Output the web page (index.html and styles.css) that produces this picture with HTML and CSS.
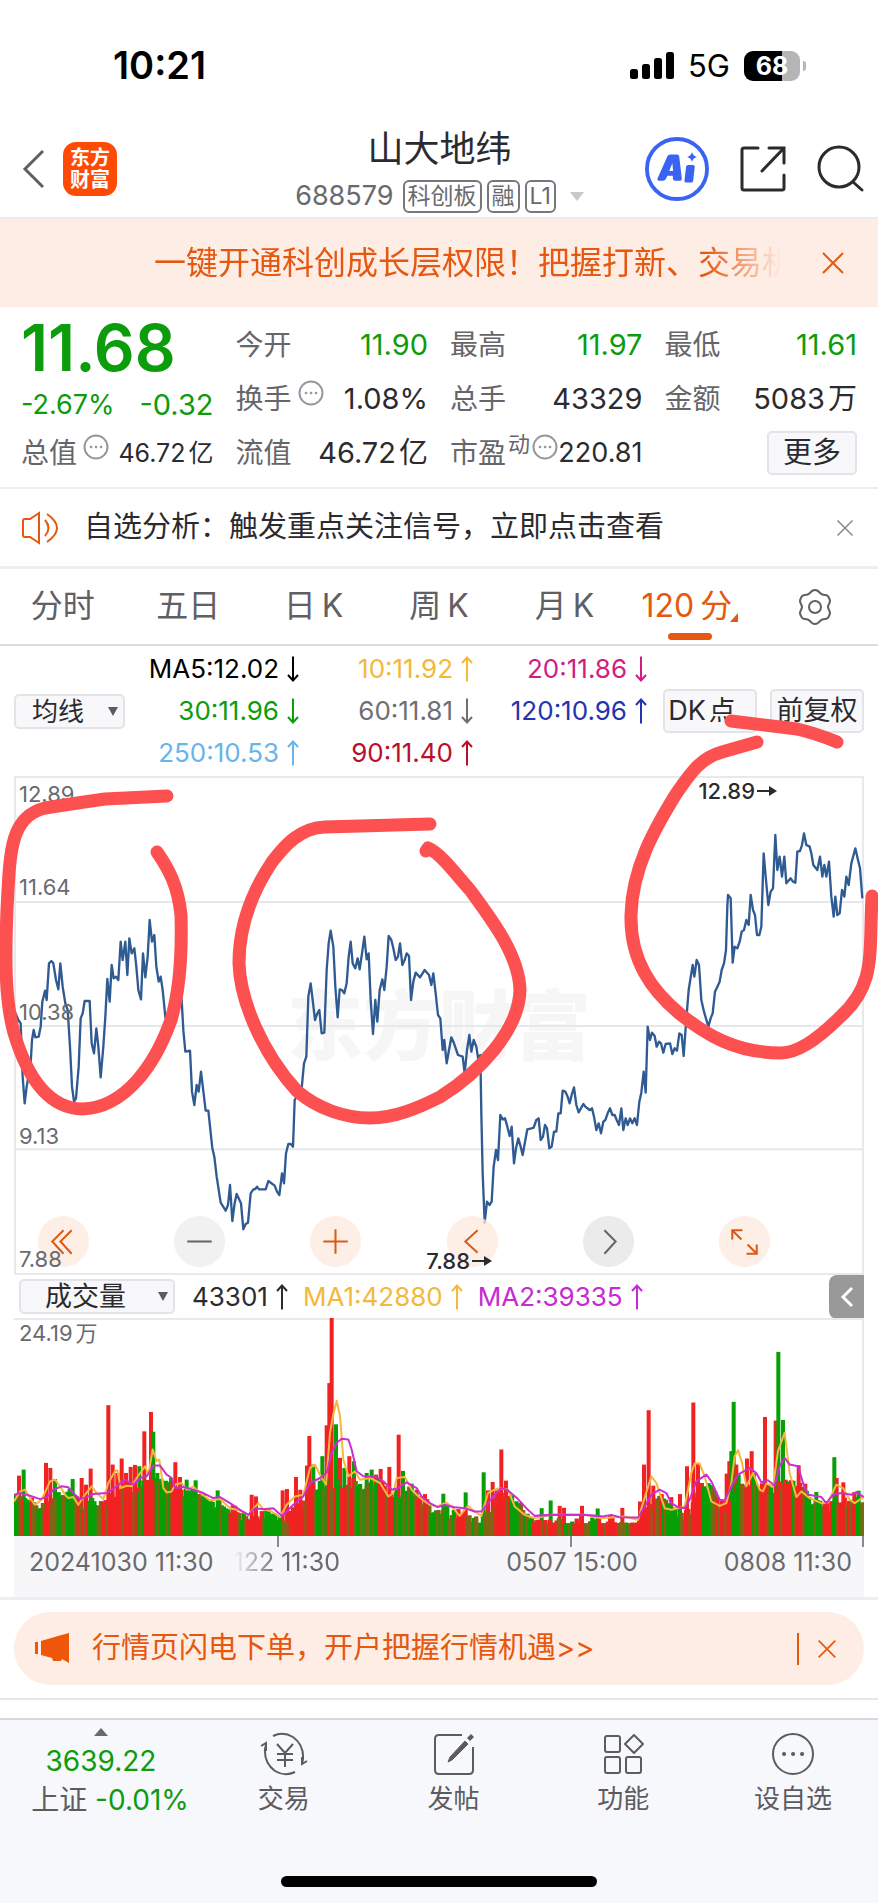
FILE: index.html
```html
<!DOCTYPE html>
<html lang="zh-CN">
<head>
<meta charset="utf-8">
<meta name="viewport" content="width=device-width, initial-scale=1">
<title>山大地纬 688579</title>
<link rel="stylesheet" href="styles.css">
</head>
<body>
<svg class="defs" aria-hidden="true">
  <symbol id="up" viewBox="0 0 12 26"><path d="M6 25.500V1.500M1 7l5-5.500L11 7"/></symbol>
  <symbol id="down" viewBox="0 0 12 26"><path d="M6 .5v24M1 19l5 5.500L11 19"/></symbol>
  <symbol id="right" viewBox="0 0 20 12"><path d="M0 6h16" stroke-width="2"/><path d="M12 1l8 5-8 5z" fill="currentColor" stroke="none"/></symbol>
  <symbol id="close" viewBox="0 0 24 24"><path d="M2 2l20 20M22 2L2 22"/></symbol>
  <symbol id="more" viewBox="0 0 26 26"><circle cx="13" cy="13" r="11.500"/><path d="M8 13h.1M13 13h.1M18 13h.1" stroke-width="2.600" stroke-linecap="round"/></symbol>
</svg>

<div class="status">
  <time class="clock">10:21</time>
  <div class="status-right">
    <svg class="signal" viewBox="0 0 44 28"><rect x="0" y="17" width="8" height="10" rx="2.500"/><rect x="12" y="12" width="8" height="15" rx="2.500"/><rect x="24" y="6" width="8" height="21" rx="2.500"/><rect x="36" y="0" width="8" height="27" rx="2.500"/></svg>
    <span class="net">5G</span>
    <span class="battery">68</span>
  </div>
</div>

<header class="top">
  <div class="top-left">
    <button class="icon-btn" aria-label="返回"><svg class="back" viewBox="0 0 24 40"><path d="M21 2L3 20l18 18"/></svg></button>
    <span class="logo"><span>东方</span><span>财富</span></span>
  </div>
  <div class="title">
    <h1>山大地纬</h1>
    <div class="code"><span class="num">688579</span><span class="tag">科创板</span><span class="tag">融</span><span class="tag">L1</span><i class="caret"></i></div>
  </div>
  <div class="top-right">
    <button class="icon-btn" aria-label="AI"><svg class="ai" viewBox="0 0 66 66"><circle cx="33" cy="33" r="31"/><path class="ai-a" fill-rule="evenodd" d="M26 18h7q2 0 2.300 2l2.700 23q.2 2-2 2h-5q-2 0-2.200-2l-.2-3h-5.500l-1.500 3q-1 2-3 2h-4q-2.600 0-1.600-2.500L23 20q1-2 3-2zM28.200 27l-3.200 8h4z"/><path class="ai-a" d="M44.500 29h5q2 0 1.800 2l-1.600 14q-.2 2-2.200 2h-5q-2 0-1.800-2l1.600-14q.2-2 2.200-2zM48.500 15.500q1 4.200 5 5.200-4 1-5 5.200-1-4.200-5-5.200 4-1 5-5.200z"/></svg></button>
    <button class="icon-btn" aria-label="分享"><svg class="share" viewBox="0 0 46 46"><path stroke-linecap="round" d="M18 2H4q-2 0-2 2v38q0 2 2 2h38q2 0 2-2V29M29 2h15v15M44 2L22 25"/></svg></button>
    <button class="icon-btn" aria-label="搜索"><svg class="search" viewBox="0 0 48 48"><circle cx="22" cy="22" r="20"/><path stroke-linecap="round" d="M36 37l9 8"/></svg></button>
  </div>
</header>

<aside class="notice">
  <a class="notice-text" href="#open">一键开通科创成长层权限！把握打新、交易机</a>
  <button class="icon-btn" aria-label="关闭"><svg class="x22"><use href="#close"/></svg></button>
</aside>

<section class="quote">
  <strong class="price">11.68</strong>
  <div class="cell"><span class="lab">今开</span><span class="green">11.90</span></div>
  <div class="cell"><span class="lab">最高</span><span class="green">11.97</span></div>
  <div class="cell"><span class="lab">最低</span><span class="green">11.61</span></div>
  <div class="cell change green"><span class="small">-2.67%</span><span>-0.32</span></div>
  <div class="cell"><span class="lab">换手<svg class="info"><use href="#more"/></svg></span><span>1.08%</span></div>
  <div class="cell"><span class="lab">总手</span><span>43329</span></div>
  <div class="cell"><span class="lab">金额</span><span>5083<span class="unit">万</span></span></div>
  <div class="cell"><span class="lab">总值<svg class="info"><use href="#more"/></svg></span><span class="tiny">46.72<span class="unit">亿</span></span></div>
  <div class="cell"><span class="lab">流值</span><span>46.72<span class="unit">亿</span></span></div>
  <div class="cell"><span class="lab pe">市盈<sup>动</sup><svg class="info"><use href="#more"/></svg></span><span class="small">220.81</span></div>
  <div class="cell end"><button class="box more">更多</button></div>
</section>

<section class="alert">
  <svg class="speaker" viewBox="0 0 38 34"><path d="M2 10q0-2 2-2h5l9-6v30l-9-6H4q-2 0-2-2zM24 9q7 8 0 16M26 3q20 14 0 28"/></svg>
  <a class="alert-text" href="#signal">自选分析：触发重点关注信号，立即点击查看</a>
  <button class="icon-btn" aria-label="关闭"><svg class="x18" viewBox="0 0 24 24"><use href="#close"/></svg></button>
</section>

<nav class="tabs">
  <button>分时</button><button>五日</button><button>日<span>K</span></button><button>周<span>K</span></button><button>月<span>K</span></button>
  <button class="on">120<span>分</span><i class="corner"></i></button>
  <button aria-label="设置"><svg class="gear" viewBox="0 0 38 38"><path d="M14 5q2-3 5-3t5 3q2 2 5 2t4 3q2 3 0 6t0 6q2 3 0 6-1 3-4 3t-5 2q-2 3-5 3t-5-3q-2-2-5-2t-4-3q-2-3 0-6t0-6q-2-3 0-6 1-3 4-3t5-2z"/><circle cx="19" cy="19" r="6"/></svg></button>
</nav>

<main class="panel">
  <div class="ma">
    <div class="picker"><select aria-label="指标"><option>均线</option></select><i class="caret dark"></i></div>
    <div class="ma-grid">
      <span class="c-black">MA5:12.02<svg><use href="#down"/></svg></span>
      <span class="c-gold">10:11.92<svg><use href="#up"/></svg></span>
      <span class="c-pink">20:11.86<svg><use href="#down"/></svg></span>
      <span class="c-green">30:11.96<svg><use href="#down"/></svg></span>
      <span class="c-gray">60:11.81<svg><use href="#down"/></svg></span>
      <span class="c-navy">120:10.96<svg><use href="#up"/></svg></span>
      <span class="c-sky">250:10.53<svg><use href="#up"/></svg></span>
      <span class="c-red">90:11.40<svg><use href="#up"/></svg></span>
    </div>
    <div class="ma-btns"><button class="box dk">DK<span class="unit">点</span><i class="corner"></i></button><button class="box">前复权</button></div>
  </div>

  <div class="chart">
    <span class="watermark">东方财富</span>
    <svg class="plot" viewBox="42 -372 2550 1497" preserveAspectRatio="none">
      <path class="grid" d="M42 6H2592M42 378H2592M42 748H2592"/>
      <polyline id="price" class="price-line"/>
    </svg>
    <div class="tools">
      <button class="warm" aria-label="最左"><svg viewBox="0 0 50 50"><path d="M25 14L14 25l11 12M33 14L22 25l11 12"/></svg></button>
      <button class="cool" aria-label="缩小"><svg viewBox="0 0 50 50"><path d="M13 25h24"/></svg></button>
      <button class="warm" aria-label="放大"><svg viewBox="0 0 50 50"><path d="M13 25h24M25 13v24"/></svg></button>
      <button class="warm" aria-label="左移"><svg viewBox="0 0 50 50"><path d="M30 14L18 25l12 11"/></svg></button>
      <button class="cool deep" aria-label="右移"><svg viewBox="0 0 50 50"><path d="M21 14l11 11-11 12"/></svg></button>
      <button class="warm" aria-label="全屏"><svg viewBox="0 0 50 50"><path d="M13 23V14h10M13 14l9 9M37 28v9H27M37 37l-9-9"/></svg></button>
    </div>
    <span class="y y1">12.89</span><span class="y y2">11.64</span><span class="y y3">10.38</span><span class="y y4">9.13</span><span class="y y5">7.88</span>
    <span class="mark high">12.89<svg><use href="#right"/></svg></span>
    <span class="mark low">7.88<svg><use href="#right"/></svg></span>
  </div>

  <div class="vol-head">
    <div class="picker wide"><select aria-label="副图指标"><option>成交量</option></select><i class="caret dark"></i></div>
    <span class="c-ink">43301<svg><use href="#up"/></svg></span>
    <span class="c-gold">MA1:42880<svg><use href="#up"/></svg></span>
    <span class="c-violet">MA2:39335<svg><use href="#up"/></svg></span>
    <button class="fold" aria-label="展开"><svg viewBox="0 0 14 22"><path d="M12 2L3 11l9 9"/></svg></button>
  </div>
  <div class="volume">
    <span class="y vmax">24.19<span class="unit">万</span></span>
    <svg class="plot" viewBox="42 178 2550 650" preserveAspectRatio="none">
      <g id="bars"></g>
      <polyline id="ma1" class="ma1"/>
      <polyline id="ma2" class="ma2"/>
    </svg>
  </div>
  <div class="axis"><span>20241030 11:30</span><span class="faded">122 11:30</span><span class="mid">0507 15:00</span><span class="last">0808 11:30</span>
    <svg class="ticks" viewBox="0 0 850 11" preserveAspectRatio="none"><path d="M264 0v11M557 0v11M849 0v11"/></svg>
  </div>
  <svg class="ink" viewBox="0 646 878 629" preserveAspectRatio="none" aria-hidden="true">
    <path d="M167 796L105 799Q70 804 45 808C10 817 10 850 7 910C5 960 5 1000 14 1033C25 1070 45 1108 82 1109C125 1108 155 1065 171 1020C180 990 182 950 181 915C178 885 168 868 157 852"/>
    <path d="M430 824L325 827C300 828 285 845 272 862C250 895 239 930 239 963C240 1000 262 1053 297 1091C318 1109 345 1118 370 1118C395 1118 418 1108 440 1097C480 1072 519 1030 520 990C519 955 492 920 470 890C455 873 440 853 428 848L426 851"/>
    <path d="M757 742L722 752C700 758 690 774 676 794C655 828 632 868 631 915C630 960 651 990 680 1014C705 1034 735 1053 781 1053C800 1053 822 1035 840 1017C876 985 869 955 872 896"/>
    <path d="M731 721L797 729Q815 733 837 742"/>
  </svg>
</main>

<aside class="promo">
  <a class="pill" href="#account">
    <svg class="horn" viewBox="0 0 36 30"><path d="M0 9h3v12H0zM6 8l17-5L34 0v30l-7-4-1 2h-8l-1-3-11-3z"/></svg>
    <span class="promo-text">行情页闪电下单，开户把握行情机遇&gt;&gt;</span>
  </a>
  <button class="icon-btn" aria-label="关闭"><svg class="x20" viewBox="0 0 24 24"><use href="#close"/></svg></button>
</aside>

<footer class="bottom">
  <nav class="dock">
    <a class="index" href="#index"><i class="tri"></i><span class="green">3639.22</span><span class="index-name">上证 <span class="green">-0.01%</span></span></a>
    <a href="#trade"><svg viewBox="0 0 48 44"><path d="M13 4Q23-1 33 5q11 8 10 22l-1 5M35 40Q25 45 15 39 4 31 5 17l1-4M1 14l5-3v8M47 29l-5 3v-7M17 12l8 9 8-9M25 21v14M17 22h16M17 28h16"/></svg><span>交易</span></a>
    <a href="#post"><svg viewBox="0 0 44 44"><path d="M30 3H7Q3 3 3 7v31q0 4 4 4h30q4 0 4-4V15"/><path d="M16 30l2-5L33 9l3 3-16 16z" fill="currentColor" stroke-width="1"/><path d="M35 6l4-4 3 3-4 4z" fill="currentColor" stroke="none"/></svg><span>发帖</span></a>
    <a href="#tools"><svg viewBox="0 0 44 44"><rect x="4" y="4" width="15" height="16" rx="2"/><rect x="4" y="25" width="15" height="16" rx="2"/><rect x="25" y="25" width="15" height="16" rx="2"/><path d="M33 3l9 9-9 9-9-9z" stroke-linejoin="round"/></svg><span>功能</span></a>
    <a href="#watch"><svg viewBox="0 0 44 44"><circle cx="22" cy="22" r="20"/><path d="M13 22h.1M22 22h.1M31 22h.1" stroke-width="4" stroke-linecap="round"/></svg><span>设自选</span></a>
  </nav>
  <div class="home"></div>
</footer>
<script src="chart.js"></script>
</body>
</html>
```

FILE: styles.css
```css
* { box-sizing: border-box; }
body {
  margin: 0;
  background: #fff;
  color: #2b2b2f;
  font: 400 28px/1.2 Inter, "Noto Sans CJK SC", sans-serif;
  overflow-x: hidden;
}
button, select { font: inherit; color: inherit; }
button { padding: 0; border: 0; background: none; cursor: pointer; }
a { color: inherit; text-decoration: none; }
svg { fill: none; stroke: currentColor; stroke-width: 2; display: block; flex: none; }
.defs { position: absolute; width: 0; height: 0; }
.green { color: #0c9c0c; }
.icon-btn { display: flex; flex: none; }
.caret { width: 0; height: 0; border: 7px solid transparent; border-top: 9px solid #c9c9cc; border-bottom: 0; }
.caret.dark { border-width: 9px 5px 0; border-top-color: #5c5c60; }

/* status bar */
.status { display: flex; justify-content: space-between; align-items: center; height: 124px; padding: 8px 78px 0 113px; color: #000; }
.clock { font-size: 38px; font-weight: 600; }
.status-right { display: flex; align-items: center; gap: 14px; }
.signal { width: 44px; height: 28px; fill: #000; stroke: none; }
.net { font-size: 31px; }
.battery { position: relative; width: 56px; height: 30px; border-radius: 9px; background: linear-gradient(90deg, #000 68%, #b5b5b5 68%); color: #fff; font-size: 25px; line-height: 30px; font-weight: 700; text-align: center; }
.battery::after { content: ""; position: absolute; right: -6px; top: 10px; width: 3px; height: 10px; border-radius: 0 3px 3px 0; background: #b5b5b5; }

/* header */
.top { display: grid; grid-template-columns: 1fr auto 1fr; align-items: center; height: 95px; padding: 0 13px 4px 22px; border-bottom: 2px solid #ececec; }
.top-left { display: flex; align-items: center; gap: 17px; }
.back { width: 24px; height: 40px; stroke-width: 3; color: #5f5f63; }
.logo { display: flex; flex-direction: column; justify-content: center; width: 54px; height: 54px; border-radius: 13px; background: #ff4a05; color: #fff; font-size: 20px; line-height: 22px; font-weight: 700; text-align: center; }
.title { display: flex; flex-direction: column; align-items: center; gap: 5px; padding-right: 8px; }
.title h1 { margin: 0; font-size: 36px; line-height: 50px; font-weight: 400; }
.code { display: flex; align-items: center; gap: 5px; height: 34px; color: #6a6a6e; }
.code .num { margin-right: 4px; font-size: 27px; }
.tag { padding: 0 3px; border: 2px solid #77777b; border-radius: 6px; font-size: 23px; line-height: 29px; }
.code .caret { margin-left: 9px; }
.top-right { display: flex; justify-content: flex-end; align-items: center; gap: 31px; }
.ai { width: 64px; height: 64px; color: #3a63f3; stroke-width: 4; }
.ai-a { fill: #3a63f3; stroke: none; }
.share { width: 46px; height: 46px; stroke-width: 3; }
.search { width: 48px; height: 48px; stroke-width: 3; }

/* scrolling notice */
.notice { display: flex; align-items: center; justify-content: space-between; height: 88px; padding: 0 33px 0 154px; background: #feede4; color: #e6570f; }
.notice-text { white-space: nowrap; font-size: 32px; -webkit-mask-image: linear-gradient(90deg, #000 86%, transparent 98%); mask-image: linear-gradient(90deg, #000 86%, transparent 98%); }
.x22 { width: 24px; height: 24px; }
.x20 { width: 20px; height: 20px; }
.x18 { width: 18px; height: 18px; color: #8a8a8e; }

/* quote figures */
.quote { display: grid; grid-template-columns: repeat(4, 1fr); grid-auto-rows: 54px; column-gap: 22px; padding: 11px 21px 7px; border-bottom: 2px solid #ececec; font-size: 29px; }
.price { align-self: center; padding-top: 6px; color: #0c9c0c; font-size: 64px; line-height: 1; font-weight: 600; }
.cell { display: flex; align-items: center; justify-content: space-between; white-space: nowrap; }
.cell.end { justify-content: flex-end; }
.change { padding-top: 12px; }
.small { font-size: 27px; }
.tiny { font-size: 25px; }
.unit { padding-left: 3px; }
.lab { display: flex; align-items: flex-start; gap: 6px; color: #66666a; font-size: 28px; line-height: 38px; }
.lab sup { font-size: 22px; line-height: 20px; }
.pe { gap: 2px; }
.info { width: 26px; height: 26px; color: #97979b; }
.box { border: 2px solid #e4e4e8; border-radius: 5px; background: #f8f8fa; }
.more { width: 90px; height: 44px; }

/* alert line */
.alert { display: flex; align-items: center; height: 80px; padding: 0 24px 0 21px; border-bottom: 3px solid #eee; }
.speaker { width: 38px; height: 34px; color: #e6570f; stroke-width: 2; }
.alert-text { flex: 1; margin-left: 25px; font-size: 29px; }

/* period tabs */
.tabs { display: grid; grid-template-columns: repeat(7, 1fr); height: 77px; border-bottom: 2px solid #dcdce0; color: #606064; font-size: 32px; }
.tabs button { position: relative; display: flex; align-items: center; justify-content: center; gap: 6px; }
.tabs .on { color: #e6570f; }
.tabs .on::after { content: ""; position: absolute; left: 50%; bottom: 4px; width: 44px; height: 7px; margin-left: -22px; border-radius: 4px; background: #e6570f; }
.corner { align-self: flex-end; width: 0; height: 0; border-left: 8px solid transparent; border-bottom: 9px solid currentColor; }
.tabs .corner { margin: 0 0 22px -8px; }
.gear { width: 38px; height: 38px; }

/* moving averages */
.panel { position: relative; padding: 0 14px; border-bottom: 3px solid #eee; }
.ma { display: flex; align-items: center; height: 130px; }
.picker { position: relative; width: 111px; height: 35px; flex: none; }
.picker select { width: 100%; height: 100%; padding: 0 0 0 16px; border: 2px solid #e4e4e8; border-radius: 5px; background: #f8f8fa; appearance: none; font-size: 26px; line-height: 31px; }
.picker .caret { position: absolute; right: 7px; top: 13px; }
.ma-grid { display: grid; grid-template-columns: repeat(3, 174px); grid-auto-rows: 42px; align-items: center; flex: 1; justify-content: end; font-size: 26px; }
.ma-grid span, .vol-head > span { display: flex; justify-content: flex-end; align-items: center; gap: 8px; white-space: nowrap; }
.ma-grid svg, .vol-head > span svg { width: 12px; height: 26px; }
.ma-btns { display: flex; gap: 13px; margin: 0 5px 0 16px; font-size: 27px; }
.ma-btns .box { position: relative; width: 94px; height: 44px; white-space: nowrap; }
.dk { padding-right: 16px; }
.ma-btns .corner { position: absolute; right: 7px; bottom: 4px; }
.c-black { color: #000; }
.c-ink { color: #2b2b2f; }
.c-gold { color: #f2b93b; }
.c-pink { color: #cf1d80; }
.c-green { color: #0c9c0c; }
.c-gray { color: #6f6f73; }
.c-navy { color: #2234b0; }
.c-sky { color: #66b5ec; }
.c-red { color: #b90f2a; }
.c-violet { color: #c62ad2; }

/* price chart */
.chart { position: relative; height: 499px; box-shadow: inset 0 0 0 2px #e9e9ec; }
.plot { position: absolute; inset: 0; width: 100%; height: 100%; }
.grid { stroke: #e6e8ec; stroke-width: 6; }
.price-line { stroke: #2f5a92; stroke-width: 7; stroke-linejoin: round; }
.watermark { position: absolute; left: 0; right: 0; top: 50%; text-align: center; color: #f6f6f7; font-size: 76px; line-height: 100px; font-weight: 900; margin-top: -50px; }
.y { position: absolute; left: 5px; color: #6a6a6e; font-size: 22px; line-height: 26px; }
.y1 { top: 5px; }
.y2 { top: 98px; }
.y3 { top: 223px; }
.y4 { top: 347px; }
.y5 { bottom: 3px; }
.tools { position: absolute; left: 24px; right: 94px; bottom: 8px; display: flex; justify-content: space-between; }
.tools button { width: 51px; height: 51px; border-radius: 50%; }
.tools svg { width: 51px; height: 51px; }
.warm { background: rgba(253, 234, 222, .75); color: #dc5a18; }
.cool { background: rgba(238, 238, 238, .85); color: #66666a; }
.deep { background: #ebebeb; }
.mark { position: absolute; display: flex; align-items: center; gap: 2px; font-size: 22px; line-height: 26px; font-weight: 500; }
.mark svg { width: 20px; height: 12px; }
.high { right: 87px; top: 2px; }
.low { right: 372px; bottom: 1px; }

/* volume */
.vol-head { position: relative; display: flex; align-items: center; height: 43px; padding-left: 5px; font-size: 26px; }
.vol-head .wide { width: 156px; margin-right: 17px; }
.wide select { padding-left: 24px; font-size: 27px; }
.vol-head > span { margin-right: 15px; }
.fold { display: flex; align-items: center; justify-content: center; width: 35px; height: 44px; margin-left: auto; border-radius: 8px 0 0 8px; background: #999; color: #fff; }
.fold svg { width: 14px; height: 22px; stroke-width: 3; }
.volume { position: relative; height: 218px; box-shadow: inset -2px 2px #e9e9ec; }
.vmax { top: 2px; }
.ma1, .ma2 { stroke-width: 6; stroke-linejoin: round; }
.ma1 { stroke: #f6b83c; }
.ma2 { stroke: #cb2fd0; }
.bar-r { fill: #f02222; stroke: none; }
.bar-g { fill: #06a006; stroke: none; }
.bar-m { fill: #806514; stroke: none; }
.axis { position: relative; display: flex; height: 61px; padding: 11px 12px 0 15px; background: #f7f7fa; color: #6a6a6e; font-size: 25px; line-height: 30px; white-space: nowrap; }
.faded { margin-left: 20px; -webkit-mask-image: linear-gradient(90deg, transparent, #000 42%); mask-image: linear-gradient(90deg, transparent, #000 42%); }
.mid { margin-left: auto; }
.last { margin-left: 86px; }
.ticks { position: absolute; left: 0; top: 0; width: 100%; height: 11px; color: #8a8a8e; }
.ink { position: absolute; left: 0; top: 0; width: 100%; height: 629px; color: #fd5050; stroke-width: 13; stroke-linecap: round; stroke-linejoin: round; pointer-events: none; }

/* promotion */
.promo { display: flex; align-items: center; height: 73px; margin: 12px 14px 13px; padding: 0 27px 0 21px; border-radius: 37px; background: #feede4; color: #e6570f; }
.pill { display: flex; flex: 1; align-items: center; gap: 21px; }
.horn { width: 36px; height: 30px; fill: #ee560a; stroke: none; }
.promo-text { font-size: 29px; }
.promo .icon-btn { padding: 6px 0 6px 18px; border-left: 2px solid #e6570f; }

/* bottom dock */
.bottom { border-top: 2px solid #e6e6e8; }
.bottom::before { content: ""; display: block; height: 18px; border-bottom: 2px solid #d6d8dc; }
.dock { display: grid; grid-template-columns: 199px repeat(4, 1fr); height: 156px; background: #f7f8fb; color: #5c5c60; font-size: 26px; }
.dock a { display: flex; flex-direction: column; align-items: center; gap: 7px; padding-top: 12px; line-height: 32px; }
.dock svg { height: 44px; width: 48px; stroke-width: 2; }
.dock .index { gap: 3px; padding: 8px 0 0 3px; font-size: 28px; line-height: 36px; }
.index-name { padding-left: 18px; white-space: nowrap; }
.tri { border: 7px solid transparent; border-top: 0; border-bottom: 8px solid #6a6a6e; margin-bottom: 4px; }
.home { height: 31px; background: #f7f8fb; }
.home::before { content: ""; display: block; width: 36%; height: 11px; margin: 0 auto; border-radius: 6px; background: #000; }
```

FILE: chart.js
```js
// Chart units are thirds of a pixel; the right half of each series is stored from its own origin.
const HALF = 1314;
const join = (left, right) => left.concat(right.map(([x, ...rest]) => [x + HALF, ...rest]));
const parse = text => text.trim().split(/\s+/).map(p => p.split(',').map((v, i) => i < 2 ? Number(v) : v));
const draw = (id, pts) => document.getElementById(id).setAttribute('points', pts.map(p => p[0] + ',' + p[1]).join(' '));

const price = join(parse(`42,330 55,360 62,370 68,530 74,610 80,560 92,490 96,420 101,390 106,412 116,410 122,380 127,305 135,272 140,300 147,190 154,183 160,190 168,240 175,268 181,190 188,260 196,310 203,330 210,440 216,560 222,605 228,595 236,500 242,355 248,340 254,303 269,303 275,430 282,460 289,385 295,440 302,532 310,440 316,350 322,237 329,305 335,195 341,235 348,230 355,240 362,125 368,180 376,125 382,225 388,115 395,160 403,145 409,200 415,270 423,298 429,160 436,232 443,170 449,60 456,125 463,105 469,200 476,245 482,230 488,270 496,350 503,380 515,290 530,220 545,300 550,390 556,455 570,452 576,575 583,615 590,555 596,575 603,515 609,565 617,632 625,632 637,745 643,770 650,830 662,908 677,932 684,915 690,855 697,963 704,910 710,882 723,910 730,988 737,972 744,968 752,880 760,868 766,867 771,860 777,868 797,868 805,843 824,857 831,875 838,885 846,820 852,850 858,760 865,732 872,732 879,740 884,600 905,565 912,490 919,470 925,290 932,250 938,300 945,360 952,340 958,330 965,400 973,398 980,210 986,130 992,92 1000,140 1006,260 1013,352 1019,268 1026,270 1033,280 1040,250 1046,170 1052,125 1058,190 1066,205 1073,175 1079,208 1086,160 1093,110 1100,178 1106,160 1112,300 1119,402 1126,300 1132,365 1139,270 1147,238 1153,270 1160,200 1166,108 1174,120 1180,145 1187,180 1194,170 1200,130 1207,195 1214,180 1220,160 1227,168 1233,300 1240,245 1247,218 1260,232 1274,210 1287,225 1294,255 1300,220 1307,280`),
parse(`0,345 7,355 14,450 19,420 26,490 33,450 40,412 48,430 60,465 74,470 80,520 87,450 94,405 100,455 107,420 115,440 121,480 127,465 130,640 134,820 140,968 147,905 155,915 161,905 167,800 174,750 180,780 187,645 194,658 201,655 208,680 215,708 221,680 228,790 234,745 241,715 248,740 254,765 262,720 268,688 280,685 287,683 295,660 302,655 308,720 315,710 321,675 327,685 334,745 341,740 348,695 355,695 361,640 368,640 374,572 382,575 389,590 395,610 401,585 408,562 415,615 422,637 436,612 442,620 455,630 462,625 468,650 475,690 482,670 489,700 496,665 502,660 509,640 516,625 523,645 530,645 536,660 543,675 550,625 556,690 563,655 569,675 576,655 583,670 590,655 597,675 604,605 610,578 617,515 623,578 629,380 636,420 642,398 650,408 656,440 663,425 669,430 676,458 683,432 696,430 703,462 710,445 717,452 724,400 731,405 737,468 744,370 752,270 764,195 769,230 776,180 783,195 790,300 798,335 811,380 818,355 824,340 831,275 845,245 851,210 858,190 864,150 868,20 870,-15 878,-5 884,188 890,140 898,145 905,125 911,95 918,90 925,60 932,75 938,-15 945,30 951,45 957,105 964,105 970,80 977,-140 984,-60 991,15 998,-25 1005,-35 1012,-195 1018,-90 1025,-130 1032,-70 1039,-130 1045,-50 1058,-65 1065,-55 1072,-52 1078,-145 1086,-147 1092,-165 1098,-200 1105,-165 1115,-160 1120,-140 1126,-105 1138,-90 1146,-130 1153,-70 1159,-105 1165,-70 1173,-115 1180,-10 1187,50 1192,-10 1198,45 1205,40 1212,-30 1219,-10 1225,-70 1232,-45 1240,-110 1252,-155 1260,-120 1266,-95 1273,-5`));

const ma2 = join(parse(`42,705 60,700 90,708 120,718 140,712 160,690 185,680 205,683 225,705 240,718 260,712 280,703 320,700 350,680 375,660 400,675 420,655 440,650 460,618 480,618 500,645 515,655 525,685 550,682 580,690 610,700 640,715 660,712 690,730 720,750 745,765 765,745 790,748 820,745 845,768 860,755 880,735 910,710 930,670 960,655 980,640 995,580 1010,550 1025,538 1045,540 1055,570 1070,635 1090,650 1130,652 1150,665 1175,690 1195,685 1220,668 1250,685 1265,710 1290,730 1313,742`),
parse(`20,735 50,742 80,745 110,755 130,755 150,730 170,705 190,685 210,692 240,718 265,745 290,768 340,765 400,765 440,765 475,768 495,770 520,765 545,772 600,773 620,740 640,705 665,690 685,700 700,730 720,742 740,745 755,720 775,665 805,645 820,665 845,720 860,722 880,680 900,645 935,625 955,640 970,668 990,662 1010,678 1025,620 1040,595 1055,615 1080,620 1095,670 1110,705 1130,708 1150,712 1165,730 1185,705 1210,700 1240,705 1255,697 1277,712`));

const ma1 = join(parse(`42,725 60,695 75,690 90,715 105,735 125,720 150,665 165,660 180,680 195,705 205,715 220,712 235,735 255,705 275,680 290,700 310,718 325,670 345,635 352,632 362,685 380,678 395,680 410,655 435,620 445,645 458,570 470,605 478,600 490,685 500,698 515,695 525,675 545,670 560,690 580,680 595,695 630,722 660,718 690,745 720,752 745,765 775,730 790,748 815,755 840,772 860,735 885,710 910,705 930,625 945,615 965,655 978,675 990,520 1000,465 1010,425 1020,470 1030,600 1045,650 1065,635 1080,660 1110,655 1140,670 1165,710 1180,700 1190,655 1215,652 1235,690 1250,705 1270,722 1290,735 1313,740`),
parse(`25,728 50,750 65,768 90,738 110,755 130,768 150,700 170,690 185,685 210,690 230,740 260,765 290,775 340,765 440,765 490,775 560,770 600,780 615,730 640,650 655,670 680,745 700,750 740,740 760,640 770,612 785,612 800,650 820,725 845,738 865,730 880,670 890,590 900,572 912,610 925,680 945,640 965,690 975,695 985,672 1005,680 1020,575 1040,520 1055,640 1075,712 1090,695 1115,715 1150,730 1170,728 1195,675 1215,685 1235,720 1250,730 1277,712`));

// Tall sessions: position, top, direction.
const peaks = join(parse(`57,648,r 71,630,g 138,610,r 151,625,r 165,658,g 218,658,g 245,655,r 258,675,r 272,627,r 325,438,r 338,615,r 352,640,r 365,597,r 378,640,r 392,622,r 405,616,r 418,620,g 433,516,r 453,458,r 460,517,g 472,640,g 513,655,g 526,608,r 540,652,r 560,660,g 587,662,g 653,692,g 755,705,r 768,710,r 848,692,r 861,688,r 888,652,r 901,690,r 921,618,r 928,530,r 940,615,g 967,590,g 980,498,r 988,372,r 995,178,r 1008,495,g 1020,595,r 1033,625,g 1048,590,r 1062,605,g 1100,640,g 1115,630,g 1128,645,r 1142,628,r 1168,622,r 1196,526,r 1209,634,g 1235,672,g 1250,690,r 1275,703,r`),
parse(`16,702,g 83,698,g 137,638,g 150,692,r 164,667,r 177,692,r 190,570,r 204,663,r 311,745,g 338,722,g 365,738,r 378,744,r 432,738,r 479,746,g 553,744,r 606,725,r 618,615,r 632,453,r 646,678,r 700,712,r 726,703,r 747,620,r 766,430,r 780,610,r 793,680,g 866,642,r 874,605,r 880,575,g 887,428,g 895,615,r 902,645,g 914,675,r 927,597,r 941,575,r 948,640,g 981,473,r 992,675,g 1013,484,r 1021,279,g 1035,482,g 1043,660,r 1048,665,g 1082,617,r 1102,672,r 1135,697,g 1189,593,g 1196,655,r 1216,668,r 1249,697,r 1262,693,g`));

// Stretches where falling sessions dominate.
const falling = [[42, 52], [66, 85], [108, 120], [165, 225], [262, 300], [410, 425], [462, 510], [550, 680], [718, 732], [785, 842], [935, 975], [1003, 1015], [1060, 1130], [1175, 1235], [1280, 1365], [1410, 1450], [1525, 1590], [1690, 1715], [1770, 1790], [1870, 1890], [1985, 2050], [2105, 2128], [2190, 2220], [2250, 2275], [2300, 2318], [2370, 2385], [2412, 2465], [2490, 2512], [2565, 2592]];

const level = x => {
  const i = ma2.findIndex(p => p[0] >= x);
  if (i <= 0) return ma2[i < 0 ? ma2.length - 1 : 0][1];
  const [a, b] = [ma2[i - 1], ma2[i]];
  return a[1] + (b[1] - a[1]) * (x - a[0]) / (b[0] - a[0]);
};
const wave = n => { const s = Math.sin(n * 12.9898) * 43758.5453; return s - Math.floor(s); };

const bars = document.getElementById('bars');
const addBar = (x, top, width, kind) => {
  const r = document.createElementNS('http://www.w3.org/2000/svg', 'rect');
  r.setAttribute('x', x);
  r.setAttribute('y', top);
  r.setAttribute('width', width);
  r.setAttribute('height', 828 - top);
  r.setAttribute('class', 'bar-' + kind);
  bars.append(r);
};
peaks.forEach(([x, top, kind]) => addBar(x - 6, top, 12, kind));
for (let n = 0; n < 380; n++) {
  const x = 42 + n * 6.7;
  const down = falling.some(([a, b]) => x >= a && x <= b);
  const kind = wave(n + 900) > 0.72 ? 'm' : down ? 'g' : 'r';
  const top = Math.min(790, Math.max(level(x), 655) + wave(n) * 34 + (kind === 'm' ? 6 : 0));
  addBar(x, top, Math.min(13, 2592 - x), kind);
}
draw('price', price);
draw('ma1', ma1);
draw('ma2', ma2);
```
